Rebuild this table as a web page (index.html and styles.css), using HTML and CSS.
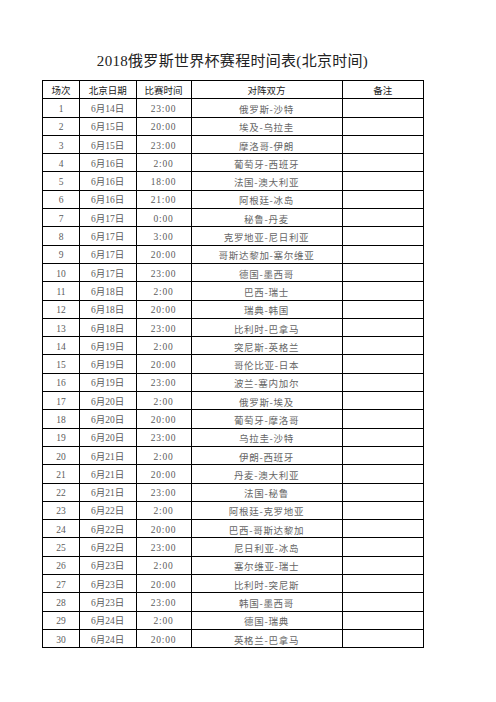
FILE: index.html
```html
<!DOCTYPE html>
<html lang="zh-CN">
<head>
<meta charset="utf-8">
<title>2018俄罗斯世界杯赛程时间表</title>
<link rel="stylesheet" href="styles.css">
</head>
<body>
<div class="page">
  <h1 class="title">2018俄罗斯世界杯赛程时间表(北京时间)</h1>
  <table class="sched">
    <colgroup>
      <col class="c-no"><col class="c-date"><col class="c-time"><col class="c-match"><col class="c-note">
    </colgroup>
    <thead>
      <tr><th>场次</th><th>北京日期</th><th>比赛时间</th><th>对阵双方</th><th>备注</th></tr>
    </thead>
    <tbody>
      <tr><td class="no">1</td><td class="date">6月14日</td><td class="time">23:00</td><td class="match">俄罗斯-沙特</td><td></td></tr>
      <tr><td class="no">2</td><td class="date">6月15日</td><td class="time">20:00</td><td class="match">埃及-乌拉圭</td><td></td></tr>
      <tr><td class="no">3</td><td class="date">6月15日</td><td class="time">23:00</td><td class="match">摩洛哥-伊朗</td><td></td></tr>
      <tr><td class="no">4</td><td class="date">6月16日</td><td class="time">2:00</td><td class="match">葡萄牙-西班牙</td><td></td></tr>
      <tr><td class="no">5</td><td class="date">6月16日</td><td class="time">18:00</td><td class="match">法国-澳大利亚</td><td></td></tr>
      <tr><td class="no">6</td><td class="date">6月16日</td><td class="time">21:00</td><td class="match">阿根廷-冰岛</td><td></td></tr>
      <tr><td class="no">7</td><td class="date">6月17日</td><td class="time">0:00</td><td class="match">秘鲁-丹麦</td><td></td></tr>
      <tr><td class="no">8</td><td class="date">6月17日</td><td class="time">3:00</td><td class="match">克罗地亚-尼日利亚</td><td></td></tr>
      <tr><td class="no">9</td><td class="date">6月17日</td><td class="time">20:00</td><td class="match">哥斯达黎加-塞尔维亚</td><td></td></tr>
      <tr><td class="no">10</td><td class="date">6月17日</td><td class="time">23:00</td><td class="match">德国-墨西哥</td><td></td></tr>
      <tr><td class="no">11</td><td class="date">6月18日</td><td class="time">2:00</td><td class="match">巴西-瑞士</td><td></td></tr>
      <tr><td class="no">12</td><td class="date">6月18日</td><td class="time">20:00</td><td class="match">瑞典-韩国</td><td></td></tr>
      <tr><td class="no">13</td><td class="date">6月18日</td><td class="time">23:00</td><td class="match">比利时-巴拿马</td><td></td></tr>
      <tr><td class="no">14</td><td class="date">6月19日</td><td class="time">2:00</td><td class="match">突尼斯-英格兰</td><td></td></tr>
      <tr><td class="no">15</td><td class="date">6月19日</td><td class="time">20:00</td><td class="match">哥伦比亚-日本</td><td></td></tr>
      <tr><td class="no">16</td><td class="date">6月19日</td><td class="time">23:00</td><td class="match">波兰-塞内加尔</td><td></td></tr>
      <tr><td class="no">17</td><td class="date">6月20日</td><td class="time">2:00</td><td class="match">俄罗斯-埃及</td><td></td></tr>
      <tr><td class="no">18</td><td class="date">6月20日</td><td class="time">20:00</td><td class="match">葡萄牙-摩洛哥</td><td></td></tr>
      <tr><td class="no">19</td><td class="date">6月20日</td><td class="time">23:00</td><td class="match">乌拉圭-沙特</td><td></td></tr>
      <tr><td class="no">20</td><td class="date">6月21日</td><td class="time">2:00</td><td class="match">伊朗-西班牙</td><td></td></tr>
      <tr><td class="no">21</td><td class="date">6月21日</td><td class="time">20:00</td><td class="match">丹麦-澳大利亚</td><td></td></tr>
      <tr><td class="no">22</td><td class="date">6月21日</td><td class="time">23:00</td><td class="match">法国-秘鲁</td><td></td></tr>
      <tr><td class="no">23</td><td class="date">6月22日</td><td class="time">2:00</td><td class="match">阿根廷-克罗地亚</td><td></td></tr>
      <tr><td class="no">24</td><td class="date">6月22日</td><td class="time">20:00</td><td class="match">巴西-哥斯达黎加</td><td></td></tr>
      <tr><td class="no">25</td><td class="date">6月22日</td><td class="time">23:00</td><td class="match">尼日利亚-冰岛</td><td></td></tr>
      <tr><td class="no">26</td><td class="date">6月23日</td><td class="time">2:00</td><td class="match">塞尔维亚-瑞士</td><td></td></tr>
      <tr><td class="no">27</td><td class="date">6月23日</td><td class="time">20:00</td><td class="match">比利时-突尼斯</td><td></td></tr>
      <tr><td class="no">28</td><td class="date">6月23日</td><td class="time">23:00</td><td class="match">韩国-墨西哥</td><td></td></tr>
      <tr><td class="no">29</td><td class="date">6月24日</td><td class="time">2:00</td><td class="match">德国-瑞典</td><td></td></tr>
      <tr><td class="no">30</td><td class="date">6月24日</td><td class="time">20:00</td><td class="match">英格兰-巴拿马</td><td></td></tr>
    </tbody>
  </table>
</div>
</body>
</html>
```

FILE: styles.css
```css
html, body {
  margin: 0;
  padding: 0;
  background: #ffffff;
}

.page {
  width: 381px;
  margin-left: 42px;
  padding-top: 51px;
  font-family: "Liberation Serif", "Noto Sans CJK SC", serif;
}

.title {
  margin: 0 0 9px 0;
  height: 20px;
  line-height: 20px;
  font-size: 15px;
  font-weight: normal;
  letter-spacing: 0.3px;
  color: #222;
  text-align: center;
  white-space: nowrap;
}

.sched {
  border-collapse: collapse;
  table-layout: fixed;
  width: 381px;
}

.c-no { width: 37px; }
.c-date { width: 56.5px; }
.c-time { width: 55px; }
.c-match { width: 151px; }
.c-note { width: 81.5px; }

.sched th,
.sched td {
  border: 1px solid #000;
  padding: 2px 0 0 0;
  height: 18.3px;
  box-sizing: border-box;
  text-align: center;
  vertical-align: middle;
  white-space: nowrap;
  overflow: hidden;
  line-height: 14px;
}

.sched tr {
  height: 18.3px;
}

.sched th {
  font-family: "Noto Sans CJK SC", sans-serif;
  font-weight: normal;
  font-size: 9.5px;
  color: #1a1a1a;
  padding-top: 0;
}

.sched td {
  font-size: 9.5px;
  color: #5c5c5c;
}

.sched td.time {
  letter-spacing: 0.8px;
}

.sched td.match {
  font-family: "Noto Sans CJK SC", sans-serif;
  letter-spacing: 0.7px;
  color: #666;
}
```
